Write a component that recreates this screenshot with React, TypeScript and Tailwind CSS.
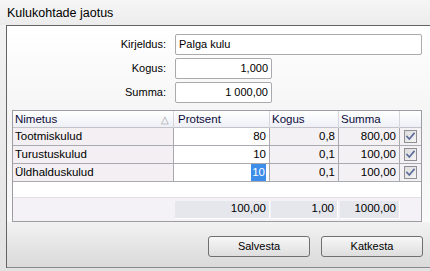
const FONT = { fontFamily: '"Liberation Sans", Arial, sans-serif' };

type Row = { name: string; pct: string; qty: string; sum: string; selected?: boolean };

const ROWS: Row[] = [
  { name: "Tootmiskulud", pct: "80", qty: "0,8", sum: "800,00" },
  { name: "Turustuskulud", pct: "10", qty: "0,1", sum: "100,00" },
  { name: "Üldhalduskulud", pct: "10", qty: "0,1", sum: "100,00", selected: true },
];

function Check() {
  return (
    <div className="w-[13px] h-[13px] border border-[#8f8f94] bg-gradient-to-br from-[#dcdcdc] to-[#f4f4f4] flex items-center justify-center">
      <svg width="11" height="11" viewBox="0 0 11 11" fill="none">
        <path d="M2 5.5l2.3 2.5L9 2.5" stroke="#5b6a9a" strokeWidth="1.6" strokeLinecap="square" />
      </svg>
    </div>
  );
}

function Field({ label, value, wide, right }: { label: string; value: string; wide?: boolean; right?: boolean }) {
  return (
    <div className="flex items-center h-[21px]">
      <div className="w-[160px] text-right pr-[1px] text-[11px] text-black">{label}</div>
      <div
        className={`ml-[8px] h-[21px] border border-[#a9a9ae] rounded-[2px] bg-white flex items-center px-[3px] text-[11px] text-black ${
          wide ? "w-[247px]" : "w-[97px]"
        } ${right ? "justify-end" : ""}`}
      >
        {value}
      </div>
    </div>
  );
}

export default function App() {
  return (
    <div className="w-[430px] h-[271px] overflow-hidden bg-gradient-to-b from-[#f4f4f4] to-[#e2e2e2]" style={FONT}>
      <div className="h-[25px] pl-[7px] pt-[2px] flex items-center text-[12.5px] text-black bg-gradient-to-b from-[#f6f6f6] to-[#ececec]">
        Kulukohtade jaotus
      </div>
      <div className="ml-[6px] w-[424px] h-[243px] border-t border-l border-[#646466] flex flex-col">
        <div className="h-[196px] bg-gradient-to-b from-white via-[#f5f4f5] to-[#fbfafb] flex flex-col">
          <div className="pt-[8px] flex flex-col gap-[3px]">
            <Field label="Kirjeldus:" value="Palga kulu" wide />
            <Field label="Kogus:" value="1,000" right />
            <Field label="Summa:" value="1 000,00" right />
          </div>
          <div className="ml-[5px] mt-[7px] w-[410px] h-[113px] border border-[#9c9ca2] bg-white flex flex-col text-[11.5px]">
            <div className="grid grid-cols-[161px_96px_69px_61px_1fr] h-[17px] bg-gradient-to-b from-white to-[#eef0f6] border-b border-[#c2c2c8] text-[#0b0b3a]">
              <div className="pl-[2px] pr-[4px] flex items-center justify-between border-r border-[#d6d6dc]">
                <span>Nimetus</span>
                <span className="text-[10px] text-[#9a9aa0]">△</span>
              </div>
              <div className="pl-[4px] flex items-center border-r border-[#d6d6dc]">Protsent</div>
              <div className="pl-[2px] flex items-center border-r border-[#d6d6dc]">Kogus</div>
              <div className="pl-[2px] flex items-center border-r border-[#d6d6dc]">Summa</div>
              <div />
            </div>
            {ROWS.map((r) => (
              <div key={r.name} className="grid grid-cols-[161px_96px_69px_61px_1fr] h-[18px] border-b border-[#a9a9b0] text-black">
                <div className="pl-[2px] flex items-center bg-[#f3eff2] border-r border-[#a9a9b0]">{r.name}</div>
                <div className="pr-[3px] flex items-center justify-end bg-white border-r border-[#a9a9b0]">
                  {r.selected ? <span className="bg-[#3d8ee8] text-white px-[1px]">{r.pct}</span> : r.pct}
                </div>
                <div className="pr-[3px] flex items-center justify-end bg-[#f3f1f4] border-r border-[#a9a9b0]">{r.qty}</div>
                <div className="pr-[3px] flex items-center justify-end bg-[#f3f1f4] border-r border-[#a9a9b0]">{r.sum}</div>
                <div className="flex items-center justify-center bg-[#f3f1f4]">
                  <Check />
                </div>
              </div>
            ))}
            <div className="flex-1" />
            <div className="h-[24px] bg-[#f4f2f6] border-t border-[#e2e0e6] flex items-center text-black">
              <div className="ml-[162px] w-[95px] h-[18px] bg-[#e5e7ed] border-r border-b border-white flex items-center justify-end pr-[3px]">100,00</div>
              <div className="ml-[1px] w-[67px] h-[18px] bg-[#e5e7ed] border-r border-b border-white flex items-center justify-end pr-[3px]">1,00</div>
              <div className="ml-[2px] w-[60px] h-[18px] bg-[#e5e7ed] border-r border-b border-white flex items-center justify-end pr-[3px]">1000,00</div>
            </div>
          </div>
        </div>
        <div className="flex-1 bg-gradient-to-b from-[#f2f2f2] to-[#dadada] flex justify-end items-start pt-[14px] pr-[7px] gap-[11px] border-b border-[#8a8a8a]">
          <button className="w-[102px] h-[21px] rounded-[3px] border border-[#707074] bg-gradient-to-b from-[#f7f7f7] to-[#dedede] text-[11px] text-black">
            Salvesta
          </button>
          <button className="w-[102px] h-[21px] rounded-[3px] border border-[#707074] bg-gradient-to-b from-[#f7f7f7] to-[#dedede] text-[11px] text-black">
            Katkesta
          </button>
        </div>
      </div>
    </div>
  );
}
